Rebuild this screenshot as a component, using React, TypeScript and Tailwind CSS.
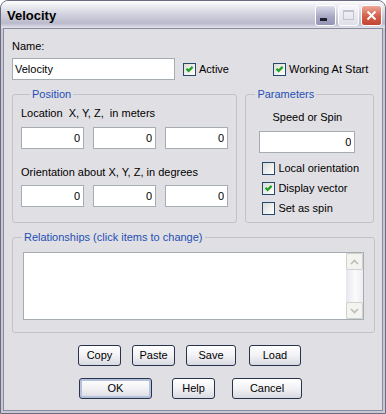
import React from 'react';

function CheckBox({ checked }: { checked?: boolean }) {
  return (
    <span className="w-[13px] h-[13px] shrink-0 border border-[#24496c] bg-linear-to-br from-[#dcdcd6] to-white flex items-center justify-center">
      {checked && (
        <svg width="11" height="11" viewBox="0 0 11 11">
          <path d="M2.5 4.8 L4.6 6.9 L8.6 2.9" stroke="#21a121" strokeWidth="2.2" fill="none" />
        </svg>
      )}
    </span>
  );
}

function CheckRow({ label, checked }: { label: string; checked?: boolean }) {
  return (
    <div className="flex items-center gap-[3px] h-[20px]">
      <CheckBox checked={checked} />
      <span className="whitespace-nowrap">{label}</span>
    </div>
  );
}

function NumBox({ className }: { className: string }) {
  return (
    <input
      readOnly
      value="0"
      className={`h-[22px] border border-[#a5acb2] bg-white text-right pr-[3px] outline-none ${className}`}
    />
  );
}

function Btn({ className, label, isDefault }: { className: string; label: string; isDefault?: boolean }) {
  return (
    <button
      className={`h-[21px] rounded-[3px] border border-[#27324c] bg-linear-to-b from-white via-[#f2f2f5] to-[#d9d9e2] flex items-center justify-center ${isDefault ? 'shadow-[inset_0_0_0_2px_#b6c2dc]' : ''} ${className}`}
    >
      {label}
    </button>
  );
}

function Group({ title, className, children }: { title: string; className: string; children: React.ReactNode }) {
  return (
    <fieldset className={`border border-[#c2c2c8] rounded-[3px] ${className}`}>
      <legend className="ml-[9px] px-[2px] text-[#1f4fb5] leading-[13px]">{title}</legend>
      {children}
    </fieldset>
  );
}

export default function App() {
  return (
    <div className="w-[386px] h-[414px] font-['Liberation_Sans',Arial,sans-serif] text-[11px] leading-[13px] text-black">
      <div className="w-full h-full flex flex-col rounded-t-[8px] border border-[#6a6a80] bg-[#c8c8d4] overflow-hidden">
        {/* Title bar */}
        <div className="h-[27px] shrink-0 flex items-center pl-[6px] pr-[3px] bg-[linear-gradient(to_bottom,#fefefe_0%,#ececf2_18%,#d2d2de_50%,#babacc_82%,#d4d4e0_94%,#e6e6ee_100%)]">
          <span className="flex-1 pt-[2px] text-[13px] leading-[15px] font-bold">Velocity</span>
          <div className="flex items-center gap-[2px] pt-[1px]">
            <div className="w-[21px] h-[21px] rounded-[3px] border border-white bg-[linear-gradient(to_bottom,#dcdcea,#a9a9c6_55%,#9393b4)] flex items-end pl-[4px] pb-[4px]">
              <span className="w-[7px] h-[3px] bg-[#1e1e30]" />
            </div>
            <div className="w-[21px] h-[21px] rounded-[3px] border border-white bg-[linear-gradient(to_bottom,#f6f6fa,#dedee8)] flex items-center justify-center">
              <span className="w-[11px] h-[10px] border border-t-2 border-[#c3c3cf]" />
            </div>
            <div className="w-[21px] h-[21px] rounded-[3px] border border-white bg-[linear-gradient(to_bottom,#eea898,#d45e4a_55%,#c24632)] flex items-center justify-center">
              <svg width="11" height="11" viewBox="0 0 11 11">
                <path d="M1.5 1.5 L9.5 9.5 M9.5 1.5 L1.5 9.5" stroke="#fff" strokeWidth="2" />
              </svg>
            </div>
          </div>
        </div>

        {/* Client area */}
        <div className="flex-1 mx-[2px] mb-[2px] border border-[#8a8a9e] bg-[#e0dfe3] px-[8px] pt-[11px] flex flex-col">
          <div>Name:</div>

          <div className="mt-[5px] flex items-start">
            <input
              readOnly
              value="Velocity"
              className="w-[163px] h-[22px] border border-[#a5acb2] bg-white pl-[2px] outline-none"
            />
            <div className="ml-[8px] w-[90px] mt-[4px] flex items-center gap-[3px] h-[15px]">
              <CheckBox checked />
              <span>Active</span>
            </div>
            <div className="mt-[4px] flex items-center gap-[3px] h-[15px]">
              <CheckBox checked />
              <span>Working At Start</span>
            </div>
          </div>

          <div className="mt-[8px] flex gap-[8px]">
            <Group title="Position" className="w-[226px] pl-[8px] pb-[15px]">
              <div className="mt-[6px] whitespace-pre">Location  X, Y, Z,  in meters</div>
              <div className="mt-[7px] flex gap-[9px]">
                <NumBox className="w-[63px]" />
                <NumBox className="w-[63px]" />
                <NumBox className="w-[63px]" />
              </div>
              <div className="mt-[17px]">Orientation about X, Y, Z, in degrees</div>
              <div className="mt-[6px] flex gap-[9px]">
                <NumBox className="w-[63px]" />
                <NumBox className="w-[63px]" />
                <NumBox className="w-[63px]" />
              </div>
            </Group>

            <Group title="Parameters" className="w-[129px]">
              <div className="ml-[13px] w-[96px] mt-[10px] text-center">Speed or Spin</div>
              <NumBox className="ml-[13px] mt-[7px] w-[96px]" />
              <div className="mt-[5px] pl-[16px] flex flex-col">
                <CheckRow label="Local orientation" />
                <CheckRow label="Display vector" checked />
                <CheckRow label="Set as spin" />
              </div>
            </Group>
          </div>

          <Group title="Relationships (click items to change)" className="mt-[8px] w-[363px] pb-[12px]">
            <div className="ml-[10px] mt-[8px] w-[341px] h-[68px] border border-[#a5acb2] bg-white flex justify-end">
              <div className="w-[17px] flex flex-col bg-[linear-gradient(to_right,#e6e6ee,#fbfbfd_55%,#ececf3)]">
                <div className="h-[17px] rounded-[2px] border border-[#d2d2cc] bg-[#f3f3ef] flex items-center justify-center">
                  <svg width="9" height="6" viewBox="0 0 9 6">
                    <path d="M1 5 L4.5 1.5 L8 5" stroke="#bdbdb6" strokeWidth="1.6" fill="none" />
                  </svg>
                </div>
                <div className="flex-1" />
                <div className="h-[17px] rounded-[2px] border border-[#d2d2cc] bg-[#f3f3ef] flex items-center justify-center">
                  <svg width="9" height="6" viewBox="0 0 9 6">
                    <path d="M1 1 L4.5 4.5 L8 1" stroke="#bdbdb6" strokeWidth="1.6" fill="none" />
                  </svg>
                </div>
              </div>
            </div>
          </Group>

          <div className="mt-[12px] flex">
            <Btn className="ml-[66px] w-[43px]" label="Copy" />
            <Btn className="ml-[11px] w-[43px]" label="Paste" />
            <Btn className="ml-[11px] w-[50px]" label="Save" />
            <Btn className="ml-[13px] w-[52px]" label="Load" />
          </div>
          <div className="mt-[12px] flex">
            <Btn className="ml-[67px] w-[73px]" label="OK" isDefault />
            <Btn className="ml-[20px] w-[43px]" label="Help" />
            <Btn className="ml-[17px] w-[70px]" label="Cancel" />
          </div>
        </div>
      </div>
    </div>
  );
}
